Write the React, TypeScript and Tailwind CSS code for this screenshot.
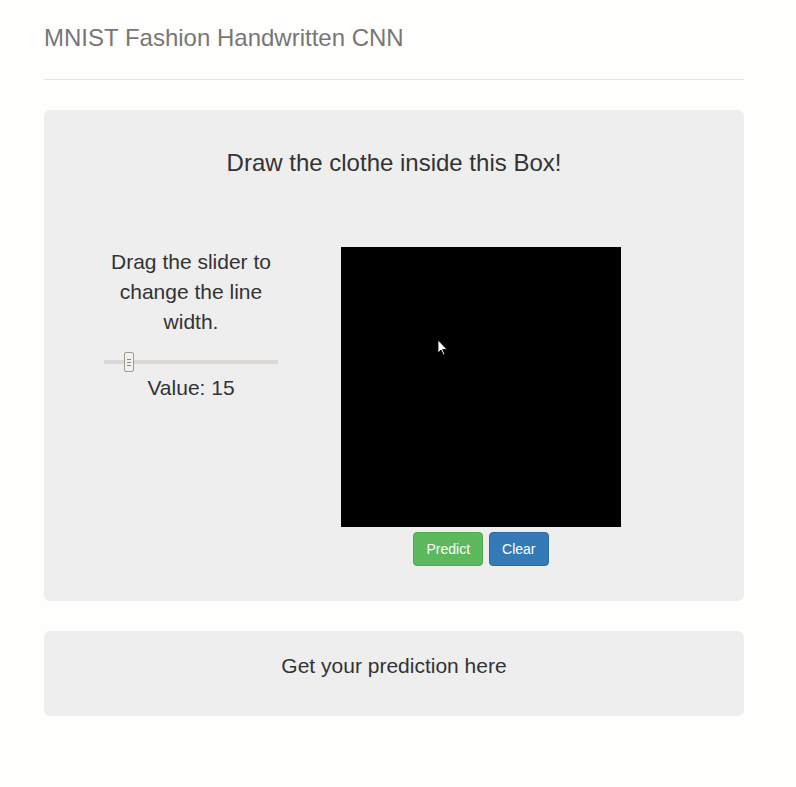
export default function App() {
  return (
    <div
      className="min-h-screen bg-[#fffefd] text-[#333]"
      style={{ fontFamily: '"Liberation Sans", Arial, sans-serif' }}
    >
      <div className="ml-[44px] w-[700px] pt-[25px]">
        <div className="border-b border-[#e5e5e5] pb-[28px]">
          <h3 className="text-[24px] leading-[26px] text-[#777]">MNIST Fashion Handwritten CNN</h3>
        </div>

        <div className="mt-[30px] rounded-[6px] bg-[#eee] pt-[39px] pb-[35px]">
          <h3 className="text-center text-[24px] leading-[28px] text-[#333]">
            Draw the clothe inside this Box!
          </h3>

          <div className="mt-[70px] flex items-start pl-[60px]">
            <div className="flex w-[174px] flex-col items-center">
              <p className="text-center text-[21px] leading-[30px]">
                Drag the slider to change the line width.
              </p>
              <div className="relative mt-[23px] h-[4px] w-[174px] bg-[#ddd8d2]">
                <div className="absolute left-[20px] top-[-8px] flex h-[20px] w-[10px] flex-col items-center justify-center gap-[2px] rounded-[2px] border border-[#a09a92] bg-[#f2f0ec]">
                  <span className="h-px w-[4px] bg-[#8d877f]" />
                  <span className="h-px w-[4px] bg-[#8d877f]" />
                  <span className="h-px w-[4px] bg-[#8d877f]" />
                </div>
              </div>
              <p className="mt-[11px] text-center text-[21px] leading-[26px]">Value: 15</p>
            </div>

            <div className="ml-[63px] flex w-[280px] flex-col items-center">
              <div className="relative h-[280px] w-[280px] bg-black">
                <svg
                  className="absolute left-[96px] top-[92px]"
                  width="12"
                  height="18"
                  viewBox="0 0 12 18"
                >
                  <path d="M1 1 L1 14 L4 11 L6.5 16 L8 15.3 L5.6 10.5 L10 10.5 Z" fill="#fff" stroke="#000" strokeWidth="0.8" />
                </svg>
              </div>
              <div className="mt-[5px] flex gap-[6px]">
                <button className="h-[34px] rounded-[4px] border border-[#4cae4c] bg-[#5cb85c] px-[12px] text-[14px] text-white">
                  Predict
                </button>
                <button className="h-[34px] rounded-[4px] border border-[#2e6da4] bg-[#337ab7] px-[12px] text-[14px] text-white">
                  Clear
                </button>
              </div>
            </div>
          </div>
        </div>

        <div className="mt-[30px] h-[85px] rounded-[6px] bg-[#eee] pt-[22px]">
          <p className="text-center text-[21px] leading-[26px] text-[#333]">Get your prediction here</p>
        </div>
      </div>
    </div>
  );
}
